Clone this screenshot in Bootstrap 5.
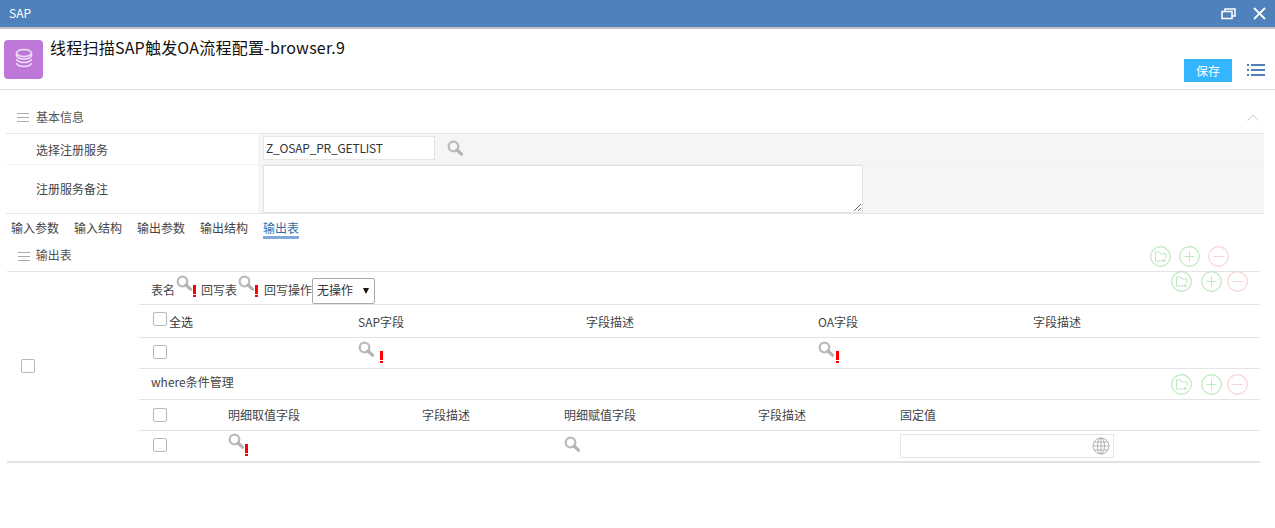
<!DOCTYPE html>
<html lang="zh">
<head>
<meta charset="utf-8">
<title>SAP</title>
<link href="https://cdn.jsdelivr.net/npm/bootstrap@5.3.0/dist/css/bootstrap.min.css" rel="stylesheet">
<style>
html,body{height:528px;overflow:hidden}
body{font-family:"Noto Sans CJK SC","Noto Sans",sans-serif;font-size:12px;color:#333;background:#fff;line-height:1.2}
.title-bar{height:29px;background:#4f81bd;border-bottom:2px solid #c4c4c4;color:#fff;padding:0 9px}
.title-bar .app{font-size:12px}
.head-area{height:61px;border-bottom:1px solid #dcdcdc;padding:11px 10px 0 4px;position:relative}
.app-icon{width:39px;height:39px;background:#bd78d8;border-radius:4px}
.page-title{font-size:16px;color:#111;margin-left:7px;margin-top:-3px;line-height:20px;letter-spacing:.22px}
.save-btn{background:#33b5ff;color:#fff;font-size:12px;width:48px;height:23px;border:0;padding:0;border-radius:0;margin-right:15px}
.head-tools{margin-top:19px}
.sec-head{height:43px;padding:20px 16px 0 17px;color:#555}
.sec-head .name{margin-left:7px;font-size:12px}
.form-wrap{margin:0 11px 0 6px;border-top:1px solid #e6e6e6;border-bottom:1px solid #e6e6e6}
.frow{display:flex}
.frow .lbl{width:252px;padding-left:30px;display:flex;align-items:center;color:#444;flex:none}
.frow .val{flex:1;background:#f5f5f5;padding-left:5px}
.r1{height:31px;border-bottom:1px solid #f0f0f0}
.r2{height:48px}
.r1 .lbl{padding-top:2px}
.txt-in{width:172px;height:24px;border:1px solid #e6e6e0;background:#fff;padding:0 2px;margin-top:2px;line-height:22px;color:#333;letter-spacing:-.2px}
.txt-area{display:block;width:600px;height:48px;border:1px solid #e2e2e2;background:#fff;resize:both;padding:0}
.tabs-row{padding:7px 0 0 11px;height:25px;gap:15px}
.tabs-row span{display:block;height:17px;color:#444}
.tabs-row .on{color:#2f6ea8;border-bottom:3px solid #7fa9dd;height:18px;line-height:14px}
.out-head{height:32px;padding:9px 0 0 18px;color:#555;position:relative}
.out-head .name{margin-left:3px}
.act-group{display:flex}
.act{width:21px;height:21px;flex:none;display:block}
.top-acts{position:absolute;left:1150px;top:7px;gap:8px}
.out-table{margin:0 15px 0 7px;border-top:1px solid #e4e4e4;border-bottom:2px solid #e2e2e2;display:flex}
.chk-col{width:132px;flex:none;display:flex;align-items:center;padding-left:14px;padding-bottom:1px}
.rows-col{flex:1}
.line{border-bottom:1px solid #e4e4e4;position:relative;color:#444}
.line:last-child{border-bottom:0}
.box{width:14px;height:14px;border:1px solid #b8b8b8;border-radius:2px;background:#fff;display:block;flex:none}
.g1,.g2{display:grid;align-items:center}
.g1{grid-template-columns:205px 228px 232px 215px 1fr;padding-left:14px}
.g2{grid-template-columns:75px 194px 142px 194px 142px 1fr;padding-left:14px}
.h-a{height:33px;display:flex;align-items:center;padding-left:12px}
.h-b{height:33px}
.h-c{height:31px}
.h-d{height:31px;padding-left:12px;display:flex;align-items:center}
.h-e{height:31px}
.h-f{height:30px}
.mag{width:16px;height:16px;display:block;flex:none}
.bang{width:3px;height:12px;display:block;flex:none;background:linear-gradient(#f00 0,#f00 9px,#fff 9px,#fff 10px,#f00 10px)}
.sel-box{width:63px;height:26px;border:1px solid #aaa;border-radius:2px;background:#fff;display:flex;align-items:center;padding-left:4px;color:#333;gap:10px}
.tri{width:0;height:0;border-left:3.5px solid transparent;border-right:3.5px solid transparent;border-top:6px solid #111;display:block}
.fix-in{width:214px;height:24px;border:1px solid #e6e6e0;background:#fff;display:flex;justify-content:flex-end;align-items:center;padding-right:3px}
.inner-acts{position:absolute;left:1032px}
.t-down1{padding-top:1px}
.t-down2{padding-top:3px}
.t-down4{padding-top:5px}
.up1{margin-top:-2px}
.up2{margin-top:-4px}
</style>
</head>
<body>
<svg width="0" height="0" class="d-none">
<defs>
<symbol id="mag" viewBox="0 0 16 16"><circle cx="6.5" cy="6.5" r="4.8" fill="none" stroke="#bbb" stroke-width="2.300"/><path d="M10 10l4.500 4.200" stroke="#b4b4b4" stroke-width="3.200" stroke-linecap="round"/></symbol>
<symbol id="fold" viewBox="0 0 21 21"><circle cx="10.500" cy="10.500" r="9.800" fill="#fff" stroke="#bde8bd" stroke-width="1.200"/><path d="M5.500 6h4l1.500 2h5v4M12 15H5.500V6" fill="none" stroke="#bde8bd" stroke-width="1"/><path d="M14 12.500v4M12 14.500h4" stroke="#bde8bd" stroke-width="1"/></symbol>
<symbol id="plus" viewBox="0 0 21 21"><circle cx="10.500" cy="10.500" r="9.800" fill="#fff" stroke="#bde8bd" stroke-width="1.200"/><path d="M10.500 5.500v10M5.500 10.500h10" stroke="#bde8bd" stroke-width="1"/></symbol>
<symbol id="minus" viewBox="0 0 21 21"><circle cx="10.500" cy="10.500" r="9.800" fill="#fff" stroke="#f8d2d2" stroke-width="1.200"/><path d="M5.500 10.500h10" stroke="#f8d2d2" stroke-width="1"/></symbol>
</defs>
</svg>

<div class="title-bar d-flex align-items-center justify-content-between">
  <span class="app">SAP</span>
  <div class="d-flex align-items-center" style="gap:17px">
    <svg width="15" height="12" viewBox="0 0 15 12"><path d="M4 3V1h10v7h-3M1 3.500h10v7H1z" fill="none" stroke="#fff" stroke-width="1.500"/></svg>
    <svg width="13" height="13" viewBox="0 0 13 13"><path d="M1 1l11 11M12 1L1 12" stroke="#fff" stroke-width="1.800"/></svg>
  </div>
</div>

<div class="head-area d-flex justify-content-between">
  <div class="d-flex">
    <div class="app-icon d-flex align-items-center justify-content-center">
      <svg width="18" height="23" viewBox="0 0 18 23" fill="none" stroke="#f0e0f7" stroke-width="1.500"><ellipse cx="9" cy="5" rx="7.500" ry="3.500"/><path d="M1.500 5v2.500c0 2 3.400 3.500 7.500 3.500s7.500-1.500 7.500-3.500V5M1.500 11c0 2 3.400 3.500 7.500 3.500s7.500-1.500 7.500-3.500M1.500 15c0 2 3.400 3.500 7.500 3.500s7.500-1.500 7.500-3.500"/></svg>
    </div>
    <div class="page-title">线程扫描SAP触发OA流程配置-browser.9</div>
  </div>
  <div class="head-tools d-flex align-items-start">
    <button class="btn save-btn" type="button">保存</button>
    <svg width="18" height="14" viewBox="0 0 18 14" fill="#4f81bd" style="margin-top:4px"><rect x="0" y="1" width="2" height="2"/><rect x="4" y="1" width="14" height="2"/><rect x="0" y="6" width="2" height="2"/><rect x="4" y="6" width="14" height="2"/><rect x="0" y="11" width="2" height="2"/><rect x="4" y="11" width="14" height="2"/></svg>
  </div>
</div>

<div class="sec-head d-flex justify-content-between">
  <div class="d-flex align-items-start">
    <svg width="12" height="10" viewBox="0 0 12 10" style="margin-top:3px"><path d="M0 .5h12M0 4.500h12M0 8.500h12" stroke="#aaa"/></svg>
    <span class="name">基本信息</span>
  </div>
  <svg width="12" height="7" viewBox="0 0 12 7" style="margin-top:4px"><path d="M.5 6.500L6 1l5.500 5.500" fill="none" stroke="#ccc"/></svg>
</div>

<div class="form-wrap">
  <div class="frow r1">
    <div class="lbl">选择注册服务</div>
    <div class="val d-flex align-items-start">
      <div class="txt-in">Z_OSAP_PR_GETLIST</div>
      <svg class="mag" style="margin:6px 0 0 12px"><use href="#mag"/></svg>
    </div>
  </div>
  <div class="frow r2">
    <div class="lbl">注册服务备注</div>
    <div class="val"><textarea class="txt-area"></textarea></div>
  </div>
</div>

<div class="tabs-row d-flex">
  <span>输入参数</span><span>输入结构</span><span>输出参数</span><span>输出结构</span><span class="on">输出表</span>
</div>

<div class="out-head">
  <svg width="12" height="10" viewBox="0 0 12 10"><path d="M0 .5h12M0 4.500h12M0 8.500h12" stroke="#aaa"/></svg>
  <span class="name">输出表</span>
  <div class="act-group top-acts">
    <svg class="act"><use href="#fold"/></svg><svg class="act"><use href="#plus"/></svg><svg class="act"><use href="#minus"/></svg>
  </div>
</div>

<div class="out-table">
  <div class="chk-col"><span class="box"></span></div>
  <div class="rows-col">
    <div class="line h-a">
      <span class="t-down4">表名</span><svg class="mag" style="margin:-10px 0 0 1px"><use href="#mag"/></svg><span class="bang" style="margin:6px 0 0 1px"></span>
      <span class="t-down4" style="margin-left:5px">回写表</span><svg class="mag" style="margin:-10px 0 0 1px"><use href="#mag"/></svg><span class="bang" style="margin:6px 0 0 1px"></span>
      <span class="t-down4" style="margin-left:6px">回写操作</span>
      <div class="sel-box" style="margin-top:5px"><span>无操作</span><span class="tri"></span></div>
      <div class="act-group inner-acts" style="top:-1px"><svg class="act"><use href="#fold"/></svg><svg class="act" style="margin:0 5px 0 9px"><use href="#plus"/></svg><svg class="act"><use href="#minus"/></svg></div>
    </div>
    <div class="line h-b g1 t-down2">
      <div class="d-flex align-items-center"><span class="box" style="margin-top:-6px;margin-right:2px"></span><span style="color:#333">全选</span></div><div>SAP字段</div><div>字段描述</div><div>OA字段</div><div>字段描述</div>
    </div>
    <div class="line h-c g1">
      <div><span class="box up1"></span></div>
      <div class="d-flex"><svg class="mag" style="margin-top:-2px"><use href="#mag"/></svg><span class="bang" style="margin:8px 0 0 6px"></span></div><div></div>
      <div class="d-flex"><svg class="mag" style="margin-top:-2px"><use href="#mag"/></svg><span class="bang" style="margin:8px 0 0 2px"></span></div><div></div>
    </div>
    <div class="line h-d">
      <span class="up2">where条件管理</span>
      <div class="act-group inner-acts"><svg class="act"><use href="#fold"/></svg><svg class="act" style="margin:0 5px 0 9px"><use href="#plus"/></svg><svg class="act"><use href="#minus"/></svg></div>
    </div>
    <div class="line h-e g2 t-down1">
      <div><span class="box up1"></span></div><div>明细取值字段</div><div>字段描述</div><div>明细赋值字段</div><div>字段描述</div><div>固定值</div>
    </div>
    <div class="line h-f g2">
      <div><span class="box up1"></span></div>
      <div class="d-flex"><svg class="mag" style="margin-top:-4px"><use href="#mag"/></svg><span class="bang" style="margin:7px 0 0 1px"></span></div><div></div>
      <div class="d-flex"><svg class="mag" style="margin-top:-4px"><use href="#mag"/></svg></div><div></div>
      <div class="fix-in"><svg width="18" height="18" viewBox="0 0 18 18" fill="none" stroke="#aaa" stroke-width=".9"><circle cx="9" cy="9" r="8"/><ellipse cx="9" cy="9" rx="3.500" ry="8"/><path d="M9 1v16M1 9h16M2 5h14M2 13h14"/></svg></div>
    </div>
  </div>
</div>
</body>
</html>
